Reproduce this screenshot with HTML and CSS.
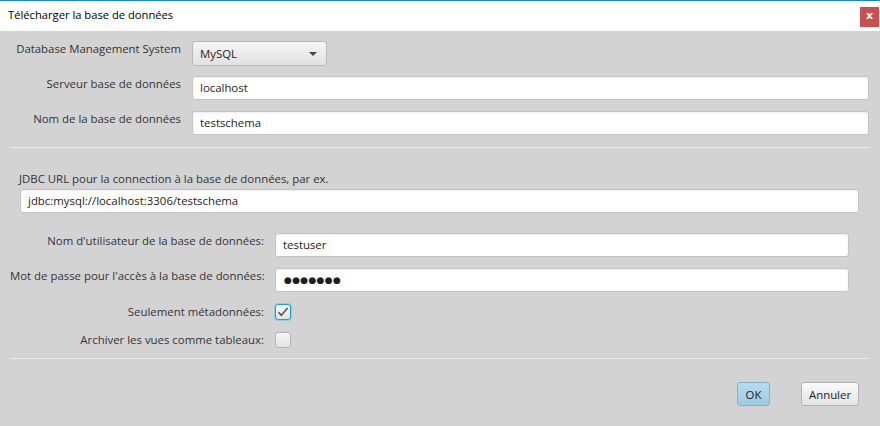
FILE: index.html
```html
<!DOCTYPE html>
<html lang="fr">
<head>
    <meta charset="UTF-8">
    <title>Télécharger la base de données</title>
    <link rel="stylesheet" href="styles.css">
</head>
<body>

<div class="window">
    <div class="titlebar">
        <span class="title">Télécharger la base de données</span>
        <span class="close">x</span>
    </div>

    <div class="content">
        <div class="form-grid first">
            <label class="label">Database Management System</label>
            <div class="combo">
                <span>MySQL</span>
                <span class="arrow"></span>
            </div>

            <label class="label">Serveur base de données</label>
            <div class="field">localhost</div>

            <label class="label">Nom de la base de données</label>
            <div class="field">testschema</div>
        </div>

        <div class="separator"></div>

        <div class="jdbc">
            <label class="jdbc-label">JDBC URL pour la connection à la base de données, par ex.</label>
            <div class="field">jdbc:mysql://localhost:3306/testschema</div>
        </div>

        <div class="form-grid second">
            <label class="label">Nom d'utilisateur de la base de données:</label>
            <div class="field">testuser</div>

            <label class="label">Mot de passe pour l'accès à la base de données:</label>
            <div class="field password">&#9679;&#9679;&#9679;&#9679;&#9679;&#9679;&#9679;</div>

            <label class="label check-label">Seulement métadonnées:</label>
            <div class="checkbox checked">
                <svg width="12" height="10" viewBox="0 0 12 10"><path d="M1.5 5.2 L4.3 8.4 L10.6 1" fill="none" stroke="#555" stroke-width="1.6"/></svg>
            </div>

            <label class="label check-label">Archiver les vues comme tableaux:</label>
            <div class="checkbox"></div>
        </div>

        <div class="separator bottom"></div>

        <div class="buttons">
            <button class="btn default">OK</button>
            <button class="btn cancel">Annuler</button>
        </div>
    </div>
</div>

</body>
</html>
```

FILE: styles.css
```css
body {
    margin: 0;
    font-family: "Open Sans", "Noto Sans", sans-serif;
    font-size: 11.4px;
    color: #333;
    background-color: #d3d3d3;
}
.window {
    width: 880px;
    height: 426px;
    background-color: #d3d3d3;
}
.titlebar {
    display: flex;
    align-items: flex-start;
    justify-content: space-between;
    height: 30px;
    border-top: 1px solid #1a85d6;
    background-color: #fff;
}
.title {
    margin: 6px 0 0 8px;
    line-height: 16px;
    font-size: 11.2px;
    color: #000;
}
.close {
    width: 19px;
    height: 20px;
    margin: 6px 1px 0 0;
    background-color: #c75050;
    color: #fff;
    font-family: "DejaVu Sans", sans-serif;
    font-weight: bold;
    font-size: 11px;
    line-height: 18px;
    text-align: center;
}
.content {
    padding-top: 10px;
}
.form-grid {
    display: grid;
    column-gap: 11px;
    row-gap: 10px;
}
.form-grid.first {
    grid-template-columns: 171px 1fr;
    grid-template-rows: 25px 25px 25px;
    margin: 0 11px 0 10px;
}
.form-grid.second {
    grid-template-columns: 254px 1fr;
    grid-template-rows: 24px 24px 17px 17px;
    row-gap: 11px;
    margin: 20px 31px 0 10px;
}
.label {
    text-align: right;
    line-height: 16px;
    white-space: nowrap;
    align-self: start;
}
.label.check-label {
    align-self: center;
}
.field {
    height: 24px;
    box-sizing: border-box;
    padding: 0 7px;
    line-height: 22px;
    background-color: #fff;
    border: 1px solid #c4c4c4;
    border-radius: 3px;
    box-shadow: inset 0 1px 2px rgba(0, 0, 0, 0.08);
    color: #222;
    white-space: nowrap;
}
.field.password {
    font-family: "DejaVu Sans", sans-serif;
    font-size: 9px;
    letter-spacing: 0.3px;
    padding-left: 8px;
    color: #1e1e1e;
}
.combo {
    display: flex;
    align-items: center;
    justify-content: space-between;
    width: 135px;
    height: 25px;
    box-sizing: border-box;
    padding: 0 9px 0 7px;
    border: 1px solid #b9b9b9;
    border-radius: 3px;
    background: linear-gradient(#f4f4f4, #e2e2e2);
    color: #222;
}
.arrow {
    width: 0;
    height: 0;
    border-left: 4px solid transparent;
    border-right: 4px solid transparent;
    border-top: 4px solid #444;
}
.separator {
    height: 0;
    border-top: 1px solid #ececec;
    margin: 11px 11px 0 10px;
}
.separator.bottom {
    margin-top: 10px;
}
.jdbc {
    margin: 23px 21px 0 20px;
}
.jdbc-label {
    display: block;
    margin: 0 0 2px -1px;
    line-height: 16px;
}
.checkbox {
    width: 16px;
    height: 16px;
    box-sizing: border-box;
    align-self: center;
    display: flex;
    align-items: center;
    justify-content: center;
    border: 1px solid #b4b4b4;
    border-radius: 3px;
    background: linear-gradient(#f6f6f6, #e4e4e4);
}
.checkbox.checked {
    border-color: #1b9ed6;
    box-shadow: 0 0 0 1px #8fcbe8;
}
.buttons {
    display: flex;
    justify-content: flex-end;
    gap: 31px;
    margin: 23px 21px 0 0;
}
.btn {
    height: 24px;
    padding: 0;
    font-family: inherit;
    font-size: 11.4px;
    color: #222;
    border: 1px solid #b3b3b3;
    border-radius: 3px;
    background: linear-gradient(#fbfbfb, #e3e3e3);
}
.btn.default {
    width: 33px;
    border-color: #86afc6;
    background: linear-gradient(#b8dcef, #9ccbe4);
}
.btn.cancel {
    width: 58px;
}
```
